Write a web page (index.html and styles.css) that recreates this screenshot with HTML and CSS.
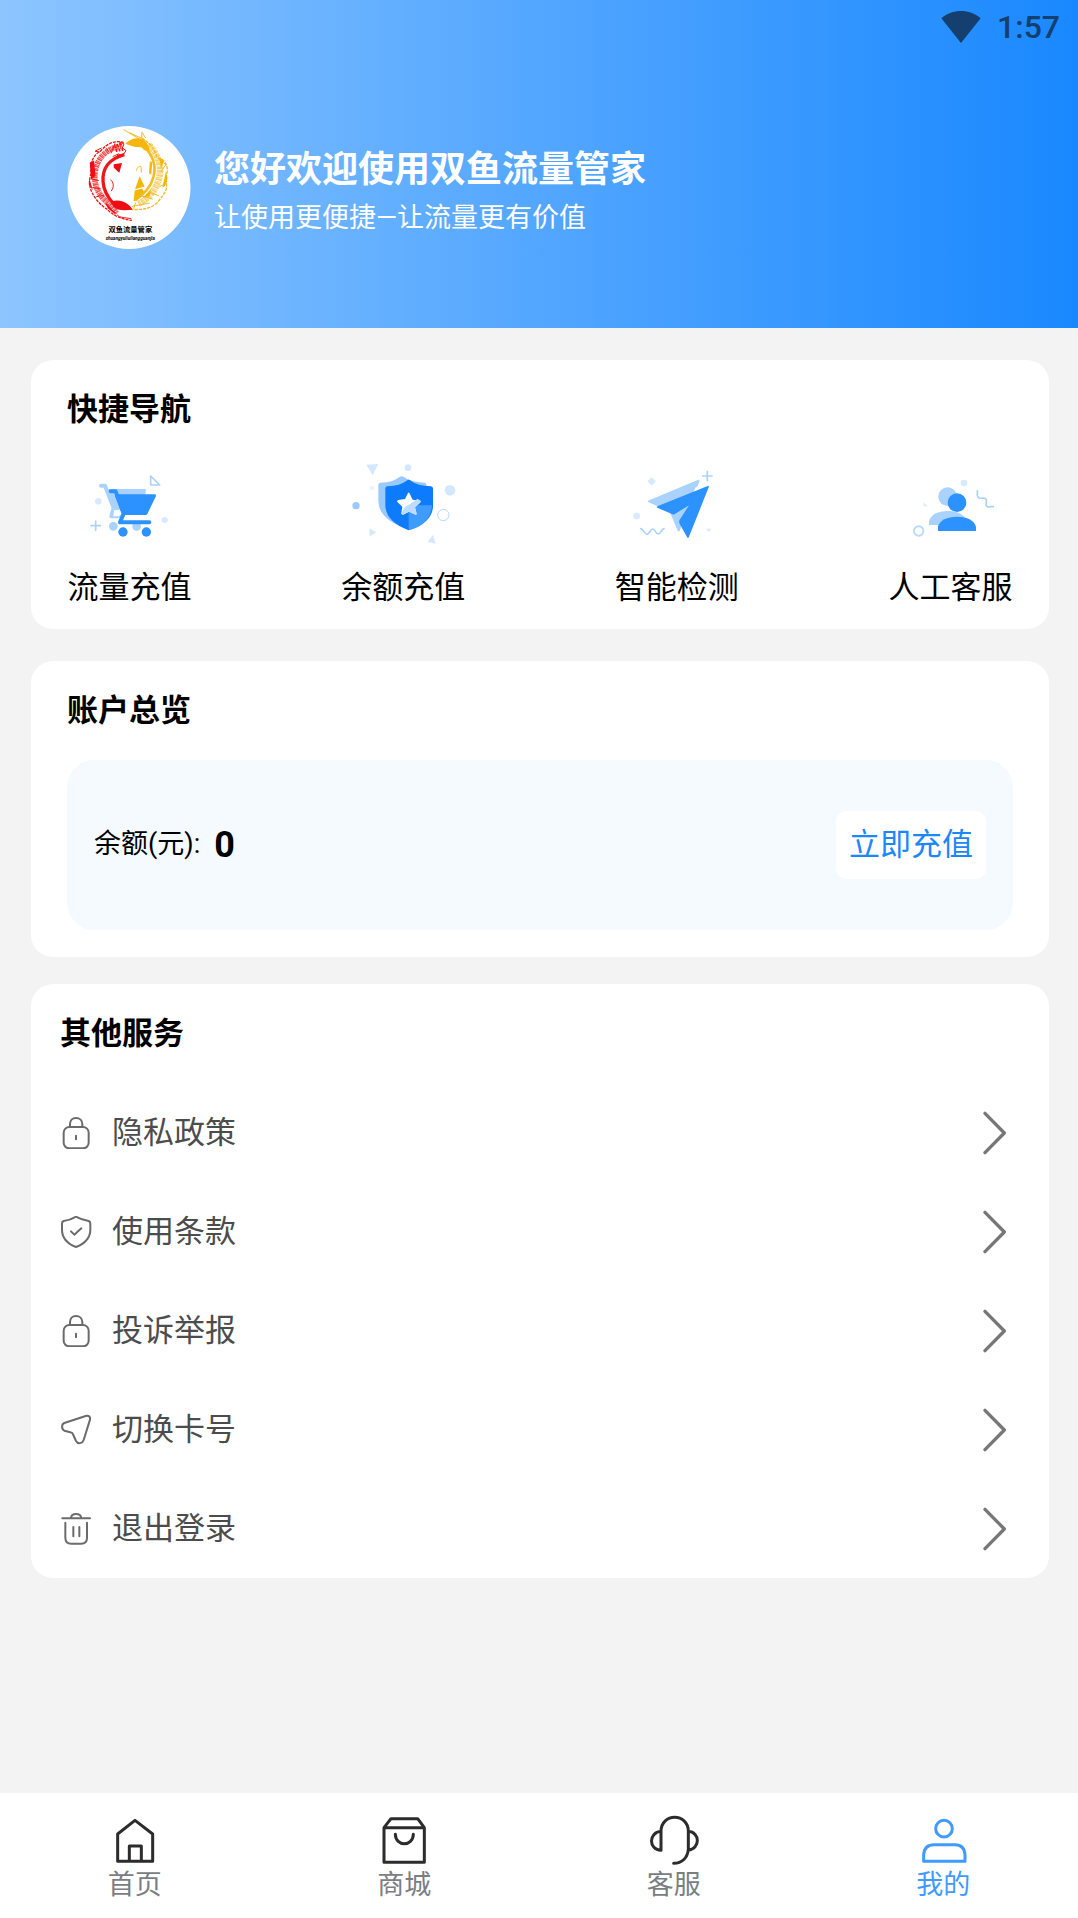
FILE: index.html
```html
<!DOCTYPE html>
<html lang="zh-CN">
<head>
    <meta charset="UTF-8">
    <meta name="viewport" content="width=device-width, initial-scale=1.0">
    <title>我的 - 双鱼流量管家</title>
    <link rel="stylesheet" href="styles.css">
</head>
<body>
    <!-- shared shapes -->
    <svg class="symbols" aria-hidden="true">
        <symbol id="lock" viewBox="91 81 96 96">
            <rect x="102" y="111" width="75" height="64" rx="17"/>
            <path d="M121 111v-8c0-11 7-19 18-19s19 8 19 19v8M139 137v11"/>
        </symbol>
        <symbol id="arrow" viewBox="0 0 72 132">
            <path d="M6 7l58 59L6 125"/>
        </symbol>
    </svg>

    <header class="header">
        <div class="status-bar">
            <svg class="wifi" viewBox="0 0 118 96"><path d="M0 22C35-7 83-7 118 22L59 96z"/></svg>
            <span>1:57</span>
        </div>
        <div class="profile">
            <svg class="avatar" viewBox="53 46 370 370" role="img" aria-label="双鱼流量管家">
                <circle cx="238" cy="231" r="185" fill="#fff"/>
                <!-- red fish -->
                <g fill="none" stroke="#ee1717">
                    <path d="M222 96c-20-7-47-2-70 26-24 12-31 38-28 67-7 20-6 42 3 57 10 22 30 42 45 50 15 18 44 31 75 34" stroke-width="4" stroke-dasharray="9 3"/>
                    <path d="M218 106c-47 5-79 37-83 88-1 40 16 65 48 91l18 24" stroke-width="17" stroke-dasharray="3 1 5 2" opacity=".75"/>
                    <path d="M224 132c-48 13-67 44-64 82 2 29 15 48 32 66" stroke-width="10"/>
                    <path d="M205 92l18 8-5 12 11 8-10 16-13-6-17 8M184 128l12-30M169 113l8 10M150 124l-14-2 19-10M125 205l22 5M128 231l25 4M139 259l24-5M182 208c10 4 12 24 2 34M202 313c8 10 25 8 43 12" stroke-width="3"/>
                    <path d="M198 120l25-4M194 110l23-12M202 136l15-1" stroke-width="9" stroke-dasharray="5 4"/>
                </g>
                <path d="M192 161l25-4-8 30c-7-5-12-12-17-16zM184 273c31-8 49 3 66 25-22 1-45 5-59-9zM120 156l13-6 4 46-13 12zM118 204l12 36-13-18zM172 280c13 16 20 23 31 31-20-6-31-18-36-32z" fill="#ef0c13"/>
                <!-- gold fish -->
                <g fill="none" stroke="#f1bc25">
                    <path d="M277 82c19 13 38 30 45 58 20 6 32 18 31 43-6 21 0 34-3 53-8 19-17 27-27 41-25 22-50 19-76 21" stroke-width="4" stroke-dasharray="10 3"/>
                    <path d="M280 103c29 31 41 59 32 95-8 32-28 53-55 71" stroke-width="8"/>
                    <path d="M297 102c31 35 42 67 30 106-9 31-32 58-60 72" stroke-width="20" stroke-dasharray="3 1 6 2" opacity=".65"/>
                    <path d="M222 57c22 13 35 21 46 27M239 66l37 17 1-18 11 17M326 145l23 17-15 22M329 229l21-10M302 246l26 10M264 253l45 13M246 288l54-10M258 276l-6 19M261 181c0-12 9-15 13-13l1 18" stroke-width="3"/>
                </g>
                <path d="M227 98c18-14 35-20 56-11 9 9 16 20 17 33-11 3-18-1-23-9-16-2-34-2-50-13zM270 197l15 31-29 8zM330 142l13 7-9 27zM349 183l5 20-7 23-9 6zM301 151l7 5-3 37-7-5zM280 262l25-27-5 22zM255 240l22-6 6 8-22 28-9 2z" fill="#f4b709"/>
                <text x="242" y="364" text-anchor="middle" class="logo-name">双鱼流量管家</text>
                <text x="242" y="388" text-anchor="middle" class="logo-sub">shuangyuliuliangguanjia</text>
            </svg>
            <div class="welcome">
                <h1>您好欢迎使用双鱼流量管家</h1>
                <p>让使用更便捷—让流量更有价值</p>
            </div>
        </div>
    </header>

    <main class="content">
        <section class="card">
            <h2>快捷导航</h2>
            <nav class="quick-nav">
                <a href="#flow">
                    <svg viewBox="24 27 375 267">
                        <g fill="#a9d2ff" stroke="#a9d2ff" stroke-linejoin="round" stroke-linecap="round">
                            <path d="M148 121h109l-15 62h-70z" stroke-width="8"/>
                            <path d="M126 107h12l26 67-7 25h25" fill="none" stroke-width="12"/>
                            <circle cx="163" cy="229" r="13" stroke="none"/>
                            <circle cx="233" cy="229" r="13" stroke="none"/>
                            <path d="M275 78v27h27z" fill="none" stroke-width="5"/>
                            <path d="M110 213v28M96 227h28" stroke-width="5"/>
                        </g>
                        <path d="M165 181l17-2 8 9-10 11h-17z" fill="#fff"/>
                        <g fill="#2b92ff" stroke="#2b92ff" stroke-linejoin="round" stroke-linecap="round">
                            <path d="M172 137h115l-26 54h-68z" stroke-width="8"/>
                            <path d="M155 124h15l24 67-11 26h88" fill="none" stroke-width="12"/>
                            <circle cx="192" cy="246" r="14" stroke="none"/>
                            <circle cx="262" cy="246" r="14" stroke="none"/>
                        </g>
                        <g fill="#d8eaff"><circle cx="118" cy="154" r="10"/><circle cx="317" cy="210" r="9"/></g>
                    </svg>
                    <span>流量充值</span>
                </a>
                <a href="#balance">
                    <svg viewBox="33 27 375 267">
                        <path d="M145 104q0-6 7-6 37 0 56-17 7-5 14 0 19 15 62 17 5 1 5 7v60q-8 48-73 66-70-28-71-78z" fill="#9ac9fd"/>
                        <path d="M166 115q0-6 7-6 37-2 57-17 6-5 12 0 20 15 61 17 6 1 6 7v56q-5 48-73 69-69-27-70-75z" fill="#0d7bfd"/>
                        <path d="M236 166h70c-2 39-27 63-70 75z" fill="#409bff"/>
                        <path d="M238 129l10 20 23 3q3 3-1 6l-15 14 5 20q-2 4-6 1l-17-8-18 9q-5 0-5-4l3-20-15-14q-2-5 3-6l20-3 9-18q2-3 4 0z" fill="#fff"/>
                        <path d="M239 163l24-17 8 6q3 3-1 6l-15 14 5 20q-2 4-6 1l-17-8-18 9q-5 0-5-4 8-20 25-27z" fill="#bddcff"/>
                        <g fill="#d3e8ff"><path d="M109 44l36-2-17 34z"/><circle cx="234" cy="53" r="10"/><circle cx="360" cy="121" r="16"/><path d="M119 235v24l20-12zM309 255l8 26-24-6z"/></g>
                        <circle cx="78" cy="167" r="11" fill="#9ac9fd"/>
                        <circle cx="126" cy="114" r="6" fill="#e7f3ff"/>
                        <circle cx="340" cy="195" r="17" fill="none" stroke="#b8daff" stroke-width="3"/>
                    </svg>
                    <span>余额充值</span>
                </a>
                <a href="#check">
                    <svg viewBox="42 27 375 267">
                        <g fill="#a9d2ff" stroke="#a9d2ff" stroke-width="6" stroke-linejoin="round"><path d="M147 154L296 92l-60 149-25-59z"/></g>
                        <path d="M287 112l15-8-40 150-17-45z" fill="#fff"/>
                        <path d="M173 171l151-61-60 151-28-50 28-43-42 24z" fill="#2b92ff" stroke="#2b92ff" stroke-width="5" stroke-linejoin="round"/>
                        <path d="M216 197l51-31-29 45-2 35z" fill="#a9d2ff"/>
                        <g fill="none" stroke="#a9d2ff" stroke-width="5"><path d="M322 62v32M306 78h32"/><path d="M120 236c10-2 13 17 21 17 8-1 10-16 17-16 8 0 9 16 17 15 8 0 10-18 19-16"/></g>
                        <path d="M155 82l13 12-13 13-13-13z" fill="#d8eaff"/>
                        <circle cx="110" cy="198" r="10" fill="#d8eaff"/>
                        <path d="M317 236h18l-9 9z" fill="#d8eaff"/>
                    </svg>
                    <span>智能检测</span>
                </a>
                <a href="#service">
                    <svg viewBox="24 27 375 267">
                        <g fill="#a9d2ff"><circle cx="203" cy="140" r="28"/><path d="M147 225v-10c4-22 28-32 57-32 30 0 51 11 56 32v10z"/></g>
                        <g fill="#2b92ff"><circle cx="231" cy="158" r="28"/><path d="M174 243v-14c5-18 27-29 57-29 31 0 53 12 57 31v12z"/></g>
                        <circle cx="116" cy="243" r="14" fill="none" stroke="#b8daff" stroke-width="6"/>
                        <path d="M292 120c2 8-5 22 6 24 8 3 17-4 21 5 3 7-6 17 3 21 5 2 13-1 20 0" fill="none" stroke="#a9d2ff" stroke-width="5"/>
                        <circle cx="252" cy="99" r="10" fill="#d8eaff"/>
                        <path d="M130 157l13 13-12-2z" fill="#d8eaff"/>
                    </svg>
                    <span>人工客服</span>
                </a>
            </nav>
        </section>

        <section class="card account">
            <h2>账户总览</h2>
            <div class="balance">
                <span class="balance-label">余额(元):</span>
                <strong>0</strong>
                <button type="button">立即充值</button>
            </div>
        </section>

        <section class="card services">
            <h2>其他服务</h2>
            <a class="service" href="#privacy">
                <svg class="icon"><use href="#lock"/></svg>
                <span>隐私政策</span>
                <svg class="arrow"><use href="#arrow"/></svg>
            </a>
            <a class="service" href="#terms">
                <svg class="icon" viewBox="91 378 96 96"><path d="M139 380c12 7 25 11 38 13q5 2 5 8v18c0 25-18 42-43 52-25-10-42-27-42-52v-18q0-6 5-8c14-2 26-6 37-13zM124 424l10 10 21-19"/></svg>
                <span>使用条款</span>
                <svg class="arrow"><use href="#arrow"/></svg>
            </a>
            <a class="service" href="#report">
                <svg class="icon"><use href="#lock"/></svg>
                <span>投诉举报</span>
                <svg class="arrow"><use href="#arrow"/></svg>
            </a>
            <a class="service" href="#card">
                <svg class="icon" viewBox="91 972 96 96"><path d="M104 999l64-21c10-3 15 3 13 11l-19 61c-3 10-17 14-23 3l-8-18q-2-7-9-8l-18-5c-9-4-9-19 0-23z"/></svg>
                <span>切换卡号</span>
                <svg class="arrow"><use href="#arrow"/></svg>
            </a>
            <a class="service" href="#logout">
                <svg class="icon" viewBox="91 1268 96 96"><path d="M98 1284h83M124 1283c1-16 29-16 31 0M107 1297v45q0 18 18 18h29q18 0 18-18v-45M131 1310v28M149 1310v28"/></svg>
                <span>退出登录</span>
                <svg class="arrow"><use href="#arrow"/></svg>
            </a>
        </section>
    </main>

    <nav class="tab-bar">
        <a href="#home">
            <svg viewBox="89 105 150 150"><path d="M112 162l52-41 53 41v82H112zM147 244v-46h36v46"/></svg>
            <span>首页</span>
        </a>
        <a href="#mall">
            <svg viewBox="897 105 150 150"><path d="M912 143h121v104H912zM912 143l21-27h80l20 27M946 163c1 38 53 38 54 0"/></svg>
            <span>商城</span>
        </a>
        <a href="#kefu">
            <svg viewBox="92 105 150 150"><path d="M128 211v-57c0-56 82-56 82 0v53c-2 27-19 43-44 43M128 154c-38 3-38 55 0 57M210 154c36 3 36 52 0 56"/></svg>
            <span>客服</span>
        </a>
        <a href="#mine" class="active">
            <svg viewBox="898 105 150 150"><circle cx="976" cy="146" r="25"/><path d="M915 244v-20q2-30 31-30h63q28 0 30 30v20z"/></svg>
            <span>我的</span>
        </a>
    </nav>
</body>
</html>
```

FILE: styles.css
```css
* {
    margin: 0;
    padding: 0;
    box-sizing: border-box;
}

body {
    min-height: 100vh;
    display: flex;
    flex-direction: column;
    background-color: #f3f3f3;
    color: #000;
    font-family: Roboto, "Noto Sans CJK SC", sans-serif;
    font-size: 31px;
}

a {
    color: inherit;
    text-decoration: none;
}

svg {
    display: block;
    flex-shrink: 0;
}

.symbols {
    position: absolute;
    width: 0;
    height: 0;
}

/* Header */
.header {
    background: linear-gradient(90deg, #8dc5ff, #1988ff);
    padding-bottom: 79px;
}

.status-bar {
    height: 54px;
    padding: 0 18px;
    display: flex;
    align-items: center;
    justify-content: flex-end;
    gap: 16px;
    color: #143f6f;
    font-size: 32px;
    font-weight: 500;
}

.wifi {
    width: 40px;
    height: 32px;
    fill: #143f6f;
}

.profile {
    display: flex;
    align-items: center;
    gap: 23px;
    margin-top: 72px;
    padding: 0 67px;
}

.avatar {
    width: 124px;
    height: 123px;
}

.logo-name {
    font-family: "Noto Sans CJK SC", sans-serif;
    font-size: 22px;
    font-weight: 700;
}

.logo-sub {
    font-size: 14px;
    font-weight: 700;
    font-style: italic;
}

.welcome {
    padding-top: 10px;
    color: #fff;
}

.welcome h1 {
    font-size: 36px;
    line-height: 50px;
    font-weight: 700;
}

.welcome p {
    font-size: 27px;
    line-height: 46px;
}

/* Cards */
.content {
    padding: 32px 29px 32px 31px;
}

.card {
    background: #fff;
    border-radius: 22px;
    padding: 0 36px;
    margin-bottom: 32px;
}

.card h2 {
    font-size: 31px;
    line-height: 99px;
    font-weight: 700;
}

.quick-nav {
    display: flex;
    justify-content: space-between;
    padding-bottom: 2px;
}

.quick-nav svg {
    width: 125px;
    height: 89px;
}

.quick-nav span {
    display: block;
    line-height: 79px;
    text-align: center;
}

.account {
    padding-bottom: 27px;
    margin-bottom: 27px;
}

.balance {
    display: flex;
    align-items: center;
    min-height: 170px;
    padding: 0 27px;
    border-radius: 27px;
    background: #f5fafe;
}

.balance-label {
    padding-bottom: 8px;
    font-size: 27px;
}

.balance strong {
    margin-left: 14px;
    font-size: 36px;
}

.balance button {
    margin-left: auto;
    padding: 0 13px;
    border: none;
    border-radius: 10px;
    background: #fff;
    color: #1c87f8;
    font: inherit;
    line-height: 68px;
}

.services {
    padding: 0 42px 0 29px;
    margin-bottom: 0;
}

.service {
    display: flex;
    align-items: center;
    height: 99px;
    color: #4c4c4c;
    line-height: 99px;
}

.icon {
    width: 32px;
    height: 32px;
    margin-right: 20px;
    fill: none;
    stroke: #6b6b6b;
    stroke-width: 6;
    stroke-linecap: round;
    stroke-linejoin: round;
}

.arrow {
    width: 24px;
    height: 44px;
    margin-left: auto;
    fill: none;
    stroke: #777;
    stroke-width: 10;
    stroke-linecap: round;
    stroke-linejoin: round;
}

/* Bottom tabs */
.tab-bar {
    display: flex;
    margin-top: auto;
    padding: 22px 0 13px;
    background: #fff;
}

.tab-bar a {
    flex: 1;
    display: flex;
    flex-direction: column;
    align-items: center;
    color: #7a7e83;
    font-size: 27px;
    line-height: 40px;
}

.tab-bar svg {
    width: 50px;
    height: 50px;
    fill: none;
    stroke: #2c2c2c;
    stroke-width: 9;
    stroke-linecap: round;
    stroke-linejoin: round;
}

.tab-bar .active {
    color: #409aff;
}

.tab-bar .active svg {
    stroke: #409aff;
}
```
